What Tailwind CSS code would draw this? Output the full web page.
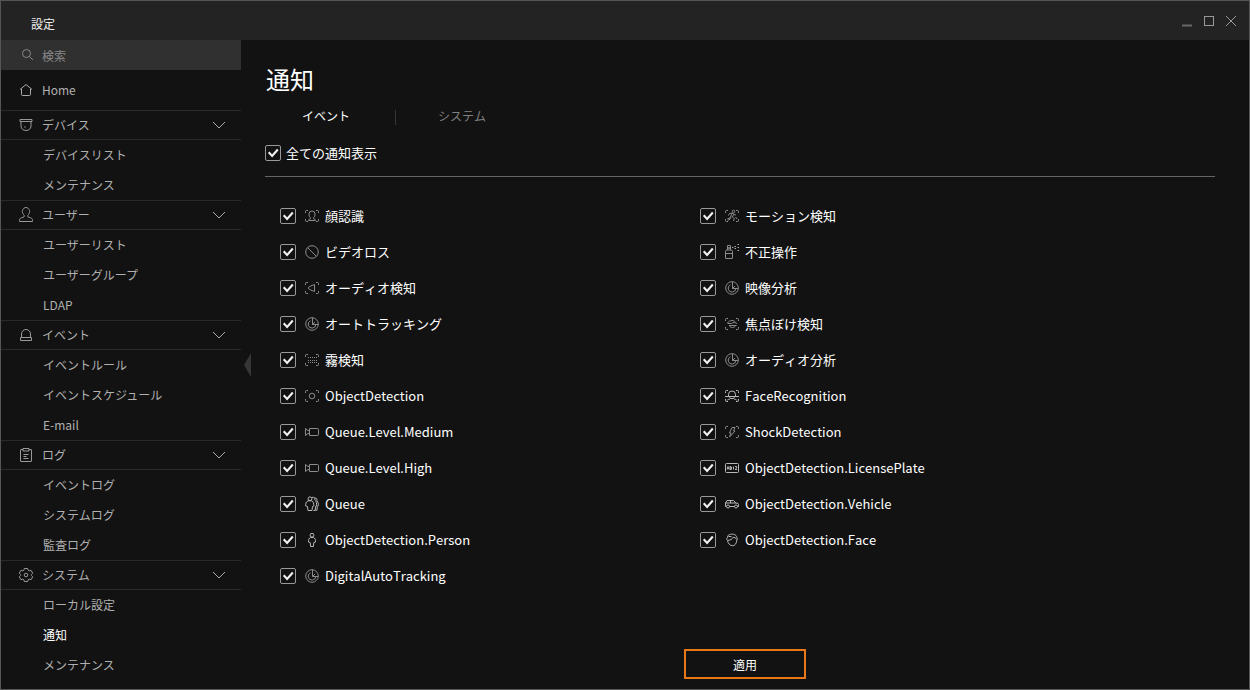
<!DOCTYPE html>
<html lang="ja">
<head>
<meta charset="utf-8">
<title>設定</title>
<script src="https://cdn.jsdelivr.net/npm/@tailwindcss/browser@4"></script>
</head>
<body class="font-['Noto_Sans_CJK_JP',sans-serif] bg-[#121212]">
<svg class="hidden">
  <symbol id="chev" viewBox="0 0 14 8"><path d="M1 1l6 6 6-6"/></symbol>
  <symbol id="check" viewBox="0 0 16 16"><rect x=".5" y=".5" width="15" height="15" rx="1.5" stroke="#999" fill="none"/><path d="M3.700 7.300l3.400 3.700 5.700-6.500" stroke="#f2f2f2" stroke-width="2.100" fill="none"/></symbol>
  <symbol id="frame" viewBox="0 0 16 16"><path d="M4 2.500H2.500a1 1 0 0 0-1 1V5M12 2.500h1.500a1 1 0 0 1 1 1V5M4 13.500H2.500a1 1 0 0 1-1-1V11M12 13.500h1.500a1 1 0 0 0 1-1V11"/></symbol>
  <symbol id="face" viewBox="0 0 16 16"><use href="#frame"/><path d="M4.500 12.500c0-1.800 2.300-1.300 2.300-2.500C5.300 9 5 7.500 5 6a3 3 0 0 1 6 0c0 1.500-.3 3-1.800 4 0 1.200 2.300.7 2.300 2.500z"/></symbol>
  <symbol id="loss" viewBox="0 0 16 16"><circle cx="8" cy="8" r="6.300"/><path d="M3.500 3.500l9 9"/></symbol>
  <symbol id="audio" viewBox="0 0 16 16"><use href="#frame"/><path d="M5.500 6.500L10.500 4.500v7l-5-2c-1.200 0-1.200-3 0-3z"/></symbol>
  <symbol id="radar" viewBox="0 0 16 16"><circle cx="8" cy="8" r="6.300"/><path d="M8.500 1.700v6.800h5.800M6.500 4.800A3.800 3.800 0 1 0 11.800 8.500M8.500 8.500l2.500-2.500"/></symbol>
  <symbol id="fog" viewBox="0 0 16 16"><use href="#frame"/><path d="M4 5.500h9M4 8.500h9M4 10.500h9" stroke-dasharray="1 1"/></symbol>
  <symbol id="object" viewBox="0 0 16 16"><use href="#frame"/><circle cx="8" cy="8" r="2.800"/></symbol>
  <symbol id="camera" viewBox="0 0 16 16"><path d="M5.500 4.500h8q1 0 1 1v5q0 1-1 1h-8zM5.500 6.500L4 6.500 1.500 4.500v7L4 9.500h1.500"/></symbol>
  <symbol id="queue" viewBox="0 0 16 16"><circle cx="6" cy="2.800" r="1.900"/><path d="M4 4.800c-2 1-2.500 3-2.300 5.200l1.800.5.500 4h4l.5-4 1.300-.5c.2-2.200-.3-4.200-2-5.200zM8 1.500c2-.8 3.500.5 2.800 2.500 1.700 1 2 3.500 1.700 6l-1 .5-.3 4H9.500M10.800 2c1.700-.3 2.700 1 2 2.700 1.500 1.500 1.800 3.300 1.500 5l-1 .5-.3 4h-1.500"/></symbol>
  <symbol id="person" viewBox="0 0 16 16"><circle cx="8" cy="3.200" r="1.900"/><path d="M6.500 5.500C4.700 6.200 4.300 8 4.500 10l1.700.5.400 4h2.800l.4-4 1.700-.5c.2-2-.2-3.800-2-4.500z"/></symbol>
  <symbol id="motion" viewBox="0 0 16 16"><use href="#frame"/><circle cx="9.500" cy="3.500" r="1.300"/><path d="M4.500 7.500l1-2 3-.3 1.500 1.300 2 .5M8.500 5.200L6.500 8.500l-1 2H3.500M9.800 6.500L8.300 9l2 1.500-.8 2.500M7 8.500l-.5 2-1.500 1.500H3.500M11.500 9l1.500 2"/></symbol>
  <symbol id="spray" viewBox="0 0 16 16"><path d="M1.500 14V7.500q0-1.500 1.500-1.500h4q1.500 0 1.500 1.500V14q0 .5-.5.500H2q-.5 0-.5-.5zM1.500 9.500h7M3.500 6V4h3v2M3.500 4V1.500h3V4z"/><path d="M8 3.500h1.500M10.500 2.500H12M10.500 4.500H12M13.500.500H15M13.500 3.500H15M13.500 6.500H15" stroke="#aaa"/></symbol>
  <symbol id="defocus" viewBox="0 0 16 16"><use href="#frame"/><path d="M3.500 7c1.200-1.800 2.700-2.500 4.500-2.500 1.500 0 2.800.700 3.500 1.800M3.500 7.500h4c1.500-1.500 4-1 5.500 0M5 9.500h7.500M5.500 10c1.500 2.300 4.500 2 6.500-.5"/></symbol>
  <symbol id="facerec" viewBox="0 0 16 16"><use href="#frame"/><path d="M4.500 8V6.500a3.500 3.500 0 0 1 7 0V8M1 8.500h14M5.500 8.500c.2 1 .6 1.500 1 2-.5 1-3 .500-3.500 2M10.500 8.500c-.2 1-.6 1.500-1 2 .5 1 3 .500 3.500 2M6.500 10.500h3"/></symbol>
  <symbol id="shock" viewBox="0 0 16 16"><use href="#frame"/><path d="M8 3.500h3L9.500 7H11l-5.500 6L7 9H5.500z"/></symbol>
  <symbol id="plate" viewBox="0 0 16 16"><rect x="1.500" y="3.500" width="13" height="9" rx="1"/><path d="M3 9.500l1-3 1 3M3.400 8.500h1.200M6 6.500v3h1.200M6 6.500h1.200M6 8h1.200M7.500 7v2.500M9.500 6.500v3M11 6.500h1.700V8L11 9.500h2"/></symbol>
  <symbol id="car" viewBox="0 0 16 16"><path d="M2.500 10.500h-1V7l1.500-2.500h6.500L12 7l2 .5.500 1v2h-1M5.500 10.500h5M1.500 7H12M6.500 4.500V7"/><circle cx="4" cy="10.500" r="1.500"/><circle cx="12" cy="10.500" r="1.500"/></symbol>
  <symbol id="head" viewBox="0 0 16 16"><path d="M3.500 5.500C3.500 3.500 5 2.300 6.500 2.300c2-.6 6 0 6.300 3.200.7.500.7 2 0 2.700C12.500 11.500 11 13.700 8.500 13.700S4 11.500 3.500 8.500c-1-.7-1-2.300 0-3zM4 8.300c2.500 0 4-1 5-3 1.500-.2 3 .8 3.500 2.200M4.500 4.500h3"/></symbol>
</svg>

<div class="flex h-[690px] w-[1250px] flex-col border border-[#555] bg-[#121212] text-white">
  <header class="flex h-[39px] shrink-0 items-center justify-between bg-[#232323] pr-[10px] pl-[30px]">
    <h1 class="pt-[6px] text-xs leading-5 text-[#f0f0f0]">設定</h1>
    <svg class="h-4 w-[58px] fill-none" viewBox="0 0 58 16"><path d="M1 12.500h10" stroke="#686868" stroke-width="2"/><rect x="23.500" y="3.500" width="9" height="9" stroke="#999"/><path d="M45 3l10 10M55 3L45 13" stroke="#999"/></svg>
  </header>
  <div class="flex min-h-0 flex-1">
    <nav class="w-60 shrink-0 text-xs text-[#b0b0b0]" id="nav">
      <div class="flex h-[30px] items-center bg-[#303030] pl-[18px] text-[#888]">
        <svg class="mr-[7px] size-4 fill-none stroke-[#888]" viewBox="0 0 16 16"><circle cx="7.500" cy="6.500" r="4"/><path d="M10.500 9.500l3.500 3.500"/></svg><span class="pt-[2px]">検索</span>
      </div>
      <div class="flex h-10 items-center pl-[17px]">
        <svg class="mr-2 size-4 fill-none stroke-[#aaa]" viewBox="0 0 16 16"><path d="M3.500 7v5.500q0 1 1 1h7q1 0 1-1V7M2 7.500l6-5 6 5"/></svg><span>Home</span>
      </div>
    </nav>
    <div class="flex w-[10px] shrink-0 items-center justify-end"><svg class="h-6 w-[7px] fill-[#363636]" viewBox="0 0 7 24"><path d="M7 0v24L0 12z"/></svg></div>
    <main class="flex flex-1 flex-col pt-[19px] pr-[34px] pl-[14px] [font-kerning:none]">
      <h2 class="h-[41px] pl-px text-2xl leading-10">通知</h2>
      <div class="flex h-8 items-center text-xs">
        <span class="w-[130px] pl-[37px]">イベント</span><span class="mt-[2px] h-[15px] w-px bg-[#363636]"></span><span class="pl-[42px] text-[#808080]">システム</span>
      </div>
      <label class="mt-[5px] flex h-8 items-center text-[13px]"><svg class="mr-[5px] size-4"><use href="#check"/></svg>全ての通知表示</label>
      <div class="mt-[7px] h-px bg-[#666]"></div>
      <div class="mt-[21px] grid grid-cols-[420px_420px] pl-[15px]" id="events"></div>
      <button class="mt-[55px] ml-[419px] h-[30px] w-[122px] border-2 border-[#e87817] pt-px text-xs leading-[26px]">適用</button>
    </main>
  </div>
</div>
<script>
const sections = [
  ['デバイス', '<path d="M2 2.500h12v2H2zM3 4.500V9c0 3 2.500 4.500 5 4.500s5-1.500 5-4.500V4.500"/><circle cx="7" cy="10" r=".3"/>', ['デバイスリスト','メンテナンス']],
  ['ユーザー', '<path d="M1.500 14.500c-.3-3.500 1.200-3.500 4.500-4.500.5-1 .3-1.500-.5-2.500-1-1.500-1.500-3-1-4C5 1.800 6.300.5 8 .5s3 1.300 3.500 3c.5 1 0 2.500-1 4-.8 1-1 1.500-.5 2.500 3.300 1 4.800 1 4.500 4.500z"/>', ['ユーザーリスト','ユーザーグループ','LDAP']],
  ['イベント', '<path d="M3.500 10.500V7a4.500 4.500 0 0 1 9 0v3.500M2.500 10.500h11v3h-11z"/>', ['イベントルール','イベントスケジュール','E-mail']],
  ['ログ', '<path d="M5 2.500H3q-.5 0-.5.500v11q0 .5.500.5h10q.5 0 .5-.5V3q0-.5-.5-.5h-2M5 1.500h6v2.500H5zM5.500 7.500h5M5.500 9.500h3M5.500 11.500h5"/>', ['イベントログ','システムログ','監査ログ']],
  ['システム', '<circle cx="8" cy="8" r="1.800"/><path d="M6.300 1.500h3.400l.5 1.800 1 .6 1.900-.6 1.600 2.900L13.400 7.500v1l1.300 1.300-1.600 2.900-1.900-.6-1 .6-.5 1.800H6.300l-.5-1.800-1-.6-1.900.6-1.600-2.900L2.600 8.500v-1L1.300 6.200l1.600-2.900 1.900.6 1-.6z"/>', ['ローカル設定','通知','メンテナンス']]
];
document.getElementById('nav').insertAdjacentHTML('beforeend', sections.map(([name, icon, items]) => `
  <div class="flex h-[30px] items-center border-y border-[#292929] pl-[17px] pr-[15px]">
    <svg class="mr-2 size-4 fill-none stroke-[#999]" viewBox="0 0 16 16">${icon}</svg>
    <span class="flex-1">${name}</span>
    <svg class="h-2 w-3.5 fill-none stroke-[#aaa]"><use href="#chev"/></svg>
  </div>` + items.map(t => `<div class="h-[30px] pl-[42px] leading-[30px] ${t === '通知' ? 'text-white' : ''}">${t}</div>`).join('')).join(''));

const events = [
  ['face','顔認識'],['motion','モーション検知'],['loss','ビデオロス'],['spray','不正操作'],
  ['audio','オーディオ検知'],['radar','映像分析'],['radar','オートトラッキング'],['defocus','焦点ぼけ検知'],
  ['fog','霧検知'],['radar','オーディオ分析'],['object','ObjectDetection'],['facerec','FaceRecognition'],
  ['camera','Queue.Level.Medium'],['shock','ShockDetection'],['camera','Queue.Level.High'],['plate','ObjectDetection.LicensePlate'],
  ['queue','Queue'],['car','ObjectDetection.Vehicle'],['person','ObjectDetection.Person'],['head','ObjectDetection.Face'],
  ['radar','DigitalAutoTracking']
];
const bright = ['queue','person','facerec','plate','car','head'];
document.getElementById('events').innerHTML = events.map(([i, t]) => `
  <label class="flex h-9 items-center text-[13px]">
    <svg class="size-4"><use href="#check"/></svg>
    <svg class="mr-[5px] ml-2 size-4 fill-none ${bright.includes(i) ? 'stroke-[#b8b8b8]' : 'stroke-[#8c8c8c]'}"><use href="#${i}"/></svg>
    <span>${t}</span>
  </label>`).join('');
</script>
</body>
</html>
